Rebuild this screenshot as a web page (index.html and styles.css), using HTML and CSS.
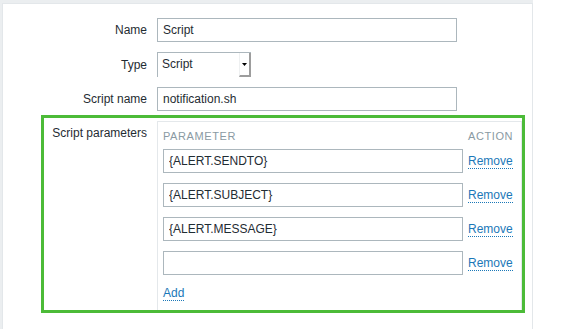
FILE: index.html
```html
<!DOCTYPE html>
<html lang="en">
<head>
    <meta charset="UTF-8">
    <title>Media type</title>
    <link rel="stylesheet" href="styles.css">
</head>
<body>
    <div class="frame">
        <div class="panel">
            <div class="row">
                <label class="label">Name</label>
                <input class="field" type="text" value="Script">
            </div>
            <div class="row">
                <label class="label">Type</label>
                <div class="select">
                    <span class="select-text">Script</span>
                    <span class="select-btn">
                        <svg width="5" height="3" viewBox="0 0 5 3"><path d="M0 0h5L2.5 3z" fill="#000"/></svg>
                    </span>
                </div>
            </div>
            <div class="row">
                <label class="label">Script name</label>
                <input class="field" type="text" value="notification.sh">
            </div>
            <div class="highlight">
                <label class="label label-top">Script parameters</label>
                <div class="params">
                    <div class="param-row param-head">
                        <span>Parameter</span>
                        <span>Action</span>
                    </div>
                    <div class="param-row">
                        <input class="field" type="text" value="{ALERT.SENDTO}">
                        <span><a class="link" href="#">Remove</a></span>
                    </div>
                    <div class="param-row">
                        <input class="field" type="text" value="{ALERT.SUBJECT}">
                        <span><a class="link" href="#">Remove</a></span>
                    </div>
                    <div class="param-row">
                        <input class="field" type="text" value="{ALERT.MESSAGE}">
                        <span><a class="link" href="#">Remove</a></span>
                    </div>
                    <div class="param-row">
                        <input class="field" type="text" value="">
                        <span><a class="link" href="#">Remove</a></span>
                    </div>
                    <div class="param-add">
                        <a class="link" href="#">Add</a>
                    </div>
                </div>
            </div>
        </div>
    </div>
</body>
</html>
```

FILE: styles.css
```css
body {
    margin: 0;
    background: #fff;
    font-family: "Liberation Sans", Arial, sans-serif;
    font-size: 12px;
    color: #1f2c33;
}
.frame {
    width: 533px;
    height: 329px;
    box-sizing: border-box;
    padding: 3px 0 0 2px;
    background: #ebeef0;
}
.panel {
    height: 100%;
    box-sizing: border-box;
    background: #fff;
    border: 1px solid #e3e7ea;
    border-bottom: none;
    padding-top: 14px;
    display: flex;
    flex-direction: column;
    gap: 10px;
}
.row {
    display: flex;
    align-items: center;
    gap: 10px;
}
.label {
    width: 144px;
    text-align: right;
    line-height: 14px;
}
.field {
    width: 300px;
    height: 24px;
    box-sizing: border-box;
    margin: 0;
    padding: 0 5px;
    border: 1px solid #acb7bd;
    border-radius: 0;
    background: #fff;
    font-family: inherit;
    font-size: 12px;
    color: #1f2c33;
    outline: none;
}
.select {
    width: 94px;
    height: 25px;
    box-sizing: border-box;
    border: 1px solid #acb7bd;
    border-right: none;
    border-bottom: none;
    display: flex;
}
.select-text {
    flex: 1;
    padding-left: 4px;
    line-height: 23px;
}
.select-btn {
    width: 12px;
    box-sizing: border-box;
    border-left: 1px solid #eef0f1;
    border-right: 2px solid #9d9d9d;
    border-bottom: 2px solid #9d9d9d;
    display: flex;
    align-items: center;
    justify-content: center;
    padding-right: 1px;
}
.highlight {
    display: flex;
    gap: 10px;
    width: 484px;
    box-sizing: border-box;
    margin: -6px 0 0 38px;
    border: 3px solid #4cbb38;
    padding-top: 3px;
}
.label-top {
    width: 103px;
    padding-top: 5px;
}
.params {
    width: 365px;
    box-sizing: border-box;
    border: 1px solid #e4e8eb;
    border-bottom: none;
    padding-left: 5px;
}
.param-row {
    display: grid;
    grid-template-columns: 300px auto;
    column-gap: 5px;
    align-items: center;
    padding: 5px 0;
}
.param-head {
    padding: 7px 0 1px;
    font-size: 11px;
    line-height: 14px;
    letter-spacing: 0.6px;
    text-transform: uppercase;
    color: #8a9aa3;
}
.param-add {
    padding: 6px 0 10px;
    line-height: 14px;
}
.link {
    color: #1b78b8;
    text-decoration: none;
    border-bottom: 1px dotted #1b78b8;
}
```
